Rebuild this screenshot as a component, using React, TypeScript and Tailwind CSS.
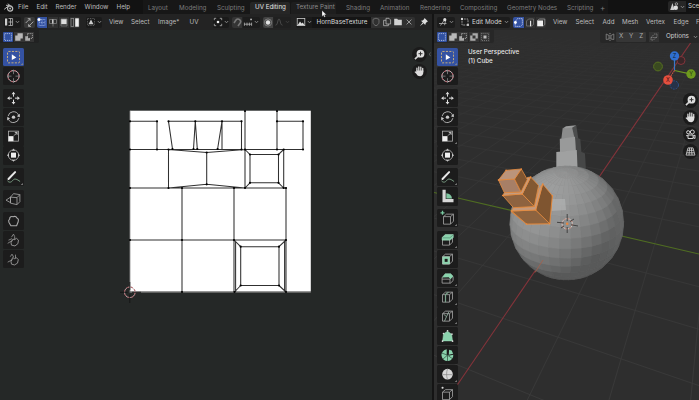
import React from "react";

type Kids = { children?: React.ReactNode };

/* Small icon drawn in a box centred on 0,0 and measured in pixels */
function Ico({ children, cls = "w-[10px] h-[10px]", box = "-5 -5 10 10" }: Kids & { cls?: string; box?: string }) {
  return (
    <svg viewBox={box} className={"shrink-0 " + cls} fill="none" stroke="#b4b4b4" strokeWidth="0.8">
      {children}
    </svg>
  );
}

function Chevron({ dim = false }: { dim?: boolean }) {
  return (
    <svg viewBox="0 0 5 4" className="h-[4px] w-[5px] shrink-0" fill="none" stroke={dim ? "#444" : "#999"} strokeWidth="0.8">
      <path d="M0.8 1 L2.5 2.8 L4.2 1" />
    </svg>
  );
}

const Txt = ({ children, cls }: Kids & { cls: string }) => (
  <span className={"shrink-0 whitespace-nowrap " + cls}>{children}</span>
);

/* ---------- select mode glyphs ---------- */
const SelNew = () => (
  <Ico cls="h-[10px] w-[10px] rounded-[1px] bg-[#3050a0]">
    <rect x="-3.4" y="-3.4" width="6.8" height="6.8" stroke="#c9d2ea" strokeDasharray="1.2 0.9" />
  </Ico>
);
const SelAdd = () => (
  <Ico cls="h-[10px] w-[10px] bg-[#353535]">
    <path d="M-1.5 -3.8H3.8V1.5H1.5V3.8H-3.8V-1.5H-1.5Z" fill="#b8b8b8" stroke="none" />
  </Ico>
);
const SelSub = () => (
  <Ico cls="h-[10px] w-[10px] bg-[#353535]">
    <path d="M-3.8 -0.8H-1V1.2H1V3.8H-3.8Z" fill="#aaa" stroke="none" />
    <path d="M-1.4 -3.4H3.4V1.4H-1.4Z" strokeDasharray="1.2 0.8" />
  </Ico>
);
const SelXor = () => (
  <Ico cls="h-[10px] w-[10px] bg-[#353535]">
    <path fillRule="evenodd" d="M-1.5 -3.8H3.8V1.5H1.5V3.8H-3.8V-1.5H-1.5ZM-1.5 -1.5V1.5H1.5V-1.5Z" fill="#aaa" stroke="none" />
  </Ico>
);
const SelAnd = () => (
  <Ico cls="h-[10px] w-[10px] bg-[#353535]">
    <rect x="-3.6" y="-3.6" width="7.2" height="7.2" strokeDasharray="1 1" stroke="#888" />
    <rect x="-1.5" y="-1.5" width="3" height="3" fill="#bbb" stroke="none" />
  </Ico>
);

/* ---------- toolbar glyphs ---------- */
const Cube = () => <path d="M-5 -2.5L-2 -5H5L5 2L2 5H-5ZM-5 -2.5H2V5M2 -2.5L5 -5" />;

const glyphs: Record<string, React.ReactNode> = {
  select: (
    <>
      <rect x="-6" y="-5.7" width="12" height="11.4" rx="1" stroke="#c3ac7c" strokeWidth="1" strokeDasharray="2.1 1.3" />
      <path d="M-1.7 -2.8L2.8 0.3L-1.7 2.8Z" fill="#fff" stroke="none" />
    </>
  ),
  cursor: (
    <>
      <circle r="5.6" stroke="#c9c9c9" strokeWidth="1" />
      <circle r="5.6" stroke="#b0505c" strokeWidth="1" strokeDasharray="2.2 2.2" />
      <path d="M0 -6.5V-2M0 6.5V2M-6.5 0H-2M6.5 0H2" stroke="#888" />
    </>
  ),
  move: (
    <>
      <path d="M0 -4V-1.5M0 4V1.5M-4 0H-1.5M4 0H1.5" stroke="#ddd" strokeWidth="1" />
      <path d="M0 -6.4L1.9 -3.8H-1.9ZM0 6.4L1.9 3.8H-1.9ZM-6.4 0L-3.8 1.9V-1.9ZM6.4 0L3.8 1.9V-1.9Z" fill="#ddd" stroke="none" />
    </>
  ),
  rotate: (
    <>
      <path d="M-5.4 -1A5.5 5.5 0 0 1 5 -2.2M5.4 1A5.5 5.5 0 0 1 -5 2.2" stroke="#bbb" strokeWidth="0.9" />
      <path d="M6.3 -3.4V0.2L3.4 -1ZM-6.3 3.4V-0.2L-3.4 1Z" fill="#ccc" stroke="none" />
      <circle r="1.7" fill="#ccc" stroke="none" />
    </>
  ),
  scale: (
    <>
      <rect x="-5" y="-5" width="10" height="10" stroke="#b0b0b0" />
      <rect x="-5" y="0" width="5" height="5" fill="#eee" stroke="none" />
      <path d="M0.6 -0.6L3.5 -3.5M1.3 -3.6H3.6V-1.3" stroke="#ddd" />
    </>
  ),
  transform: (
    <>
      <circle r="5.2" stroke="#aaa" strokeWidth="0.9" />
      <rect x="-2.5" y="-2.5" width="5" height="5" fill="#eee" stroke="none" />
      <path d="M0 -6.6L1.6 -4.5H-1.6ZM0 6.6L1.6 4.5H-1.6ZM-6.6 0L-4.5 1.6V-1.6ZM6.6 0L4.5 1.6V-1.6Z" fill="#c4c4c4" stroke="none" />
    </>
  ),
  annotate: (
    <>
      <path d="M-5 1.8L1.6 -5" stroke="#e8e8e8" strokeWidth="2" strokeLinecap="round" />
      <path d="M-6 3.7C-4 6 -2 5 -0.5 3S3.5 2 6.6 4.4" stroke="#799c83" strokeWidth="1" />
    </>
  ),
  measure: (
    <>
      <path d="M-5 -6.4H-1.8V2.9H6V6H-5Z" fill="#d8d8d8" stroke="none" />
      <path d="M-1.2 -3A6 6 0 0 1 4.5 2.3H-1.2Z" fill="#7fc5a0" stroke="none" />
    </>
  ),
  rip: (
    <>
      <path d="M-3 -2L0 -5.5L6.4 -4.5V2.5L3.5 5.5L-3 4ZM-3 -2L3.5 -1.5V5.5M3.5 -1.5L6.4 -4.5" />
      <path d="M-7.5 1L-3 -2V3.5Z" />
    </>
  ),
  grab: <path d="M-2.6 4.6L-4.6 1C-5.4 -0.6 -4.4 -1.6 -3.9 -2C-3.9 -4.4 -2 -5 -0.4 -4.4C1 -5 2.8 -4.6 3.4 -3.2C5 -2.8 5.2 -0.8 4.6 0.8L3.1 4.6Z" strokeWidth="1.1" />,
  relax: (
    <>
      <path d="M-5.8 3.2L-1 0.2M-2 -3L0 -6L1.2 -3.5V-0.5M-5 0L-1.5 -1.5" stroke="#999" />
      <path d="M-2.5 2.5L-0.6 -1L1 -0.5L3 -1.8L5 0L4.4 3.5L1.5 5.8L-2 5Z" />
    </>
  ),
  pinch: (
    <>
      <path d="M-5.8 3L-1 0.5M-3.2 -2.5L-1.5 -5L0.2 -2M2 -4.5V-1" stroke="#999" />
      <path d="M-2.5 2.5L-0.8 -1.6L1 -0.5L3 -1.4L4.8 0.5L4 4L1 5.8L-2 5Z" />
    </>
  ),
  addcube: (
    <>
      <g transform="translate(1 1)"><Cube /></g>
      <path d="M-5 -7.3V-3.3M-7 -5.3H-3" stroke="#78c8a0" strokeWidth="1.3" />
    </>
  ),
  extrude: (
    <>
      <Cube />
      <path d="M-5.4 -2.7L-2.2 -5.6H5.8V-2.6L2.5 0H-5.4Z" fill="#8ad3ad" stroke="#a5d8bd" strokeWidth="0.5" />
      <path d="M-5 -2.3H2.3L5.4 -5" stroke="#4c8067" strokeWidth="0.6" />
    </>
  ),
  inset: (
    <>
      <Cube />
      <path d="M-4.8 -2.3H2V4.8H-4.8Z" fill="#8ad3ad" stroke="#a5d8bd" strokeWidth="0.5" />
      <rect x="-2.8" y="-0.3" width="2.9" height="3" fill="#1c1c1c" stroke="none" />
    </>
  ),
  bevel: (
    <>
      <path d="M-5.4 -0.8L-2 -4H3L5.6 -1.5V2.5L3 5H-5.4ZM-5.4 1H2.5V5" />
      <path d="M-5.4 -0.6L-2.4 -4.6H3.2L5.8 -2L3 1L1.2 -0.8Z" fill="#8ad3ad" stroke="none" />
    </>
  ),
  loop: (
    <>
      <Cube />
      <path d="M-2 5V-2.5L1 -5" stroke="#7aa38b" strokeWidth="1.2" />
    </>
  ),
  knife: (
    <>
      <Cube />
      <path d="M-4 -2L-1 0.5L-3 5M-1 0.5L1.5 -4.5" stroke="#9ab9a8" />
    </>
  ),
  poly: (
    <>
      <path d="M-4.9 4.8L-4 -2.2L0 -5L4.2 -1.8L5 4.8Z" fill="#8ad3ad" stroke="#9bd8b8" strokeWidth="0.5" />
      <path d="M-5 5h.1M5 5h.1M0 -5.3h.1M-4 -2.6h.1M4.4 -2h.1" stroke="#ddd" strokeWidth="1.6" strokeLinecap="round" />
    </>
  ),
  spin: (
    <>
      <path d="M-0.8 0L-0.8 -5.8A5.9 5.9 0 1 0 5.8 -0.4L1.2 0.6L1.6 -5.5L4.2 -4.6L5.6 -1.4Z" fill="#8ad3ad" stroke="none" />
      <path d="M0 0L-6 -2.2M0 0L-4.6 4M0 0V6M0 0L5 3.6" stroke="#2b4a3b" strokeWidth="0.7" />
    </>
  ),
  smooth: (
    <>
      <circle r="5.3" fill="#d8d8d8" stroke="none" />
      <path d="M-5.2 0.5H5.2M0 -5.2C-1.2 -2 -1.2 2 0 5.2" stroke="#858585" strokeWidth="0.7" />
    </>
  ),
  shear: (
    <>
      <g transform="translate(0 1.5)"><Cube /></g>
      <path d="M-5 -5.5h.1" stroke="#ddd" strokeWidth="2" strokeLinecap="round" />
    </>
  ),
};

function Tool({ name, corner = false }: { name: string; corner?: boolean }) {
  const active = name === "select";
  return (
    <div className={"h-[18.3px] w-[21px] shrink-0 rounded-[1.5px] " + (active ? "bg-[#3452a2]" : "bg-[#1c1c1c]")}>
      <svg viewBox="-10.5 -9.15 21 18.3" className="block h-full w-full" fill="none" stroke="#a8a8a8" strokeWidth="0.8">
        {glyphs[name]}
        {corner && <path d="M9.3 5.8V7.8H7.3Z" fill="#888" stroke="none" />}
      </svg>
    </div>
  );
}

function Toolbar({ groups, corners }: { groups: string[][]; corners: string[] }) {
  return (
    <div className="flex flex-col gap-[3.4px]">
      {groups.map((g) => (
        <div key={g[0]} className="flex flex-col gap-[0.9px]">
          {g.map((n) => (
            <Tool key={n} name={n} corner={corners.includes(n)} />
          ))}
        </div>
      ))}
    </div>
  );
}

/* ---------- navigation buttons ---------- */
function NavButton({ kind }: { kind: string }) {
  return (
    <svg viewBox="-7.5 -7.5 15 15" className="h-[15px] w-[15px] shrink-0" fill="none" stroke="#d5d5d5" strokeWidth="1">
      <circle r="7.5" fill="#1b1b1b" stroke="none" />
      {kind === "zoom" && (
        <>
          <circle cx="1" cy="-0.8" r="3.9" fill="#ddd" stroke="none" />
          <path d="M-1.4 1.6L-4.6 4.6" strokeWidth="1.6" />
          <path d="M1 -2.8V1.2M-1 -0.8H3" stroke="#333" />
        </>
      )}
      {kind === "hand" && (
        <>
          <path d="M-2.6 -0.5V-3.4M-0.7 -1V-4.6M1.3 -1V-4.4M3.2 0V-3.2" strokeWidth="1.3" strokeLinecap="round" />
          <path d="M-3.2 -1H3.8V1.5C3.6 3.5 2.3 4.7 0.6 4.7C-1.3 4.7 -2.2 3.7 -3 2.4L-5 0.4L-4.2 -0.2L-3.2 0.5Z" fill="#ddd" stroke="none" />
        </>
      )}
      {kind === "camera" && (
        <>
          <circle cx="-2.3" cy="-2.2" r="1.6" />
          <circle cx="1.8" cy="-2.5" r="2" />
          <path d="M-2.5 0.5H2.6V4H-2.5ZM2.6 1.6L4.5 0.6V4L2.6 3M-4.4 1.2H-2.5" />
        </>
      )}
      {kind === "grid" && <path d="M-2.5 -3.6H2.5L4.4 3.6H-4.4ZM-3.2 -1.2H3.2M-3.8 1.3H3.8M-0.9 -3.6L-1.5 3.6M0.9 -3.6L1.5 3.6" strokeWidth="0.8" />}
    </svg>
  );
}

/* ---------- UV layout ---------- */
const uvLines = [
  "M130 121.3H157V149.5", "M130 149.5H242", "M168.5 121.3H241.5V149.5", "M168.5 121.3L172.5 149",
  "M195.3 121.3L193.5 149M195.3 121.3L197.3 149", "M222 121.3L217.6 149M222 121.3V149.5",
  "M245 111V188M277 111V149.5M277 121.3H303V149.5H245", "M168.5 149.5V188M168.5 149.5L206.7 152.5L245 149.5",
  "M206.7 152.5V184.3M168.5 188L206.7 184.3L245 188", "M130 188H286V292M283.7 149.5V188",
  "M245 149.5L250 154.5H278.5L283.7 149.5M250 154.5V182.8H278.5V154.5M250 182.8L245 188M278.5 182.8L283.7 188",
  "M182 188V292M234 188V292M130 240H286M130 292H311",
  "M234 240L240.7 246.7H279V285.5H240.7V246.7M279 246.7L286 240M279 285.5L286 292M240.7 285.5L234.5 292M235.6 242V292M284.6 242V290",
];
const uvDots = [
  [130, 121.3], [157, 121.3], [168.5, 121.3], [195.3, 121.3], [222, 121.3], [241.5, 121.3], [277, 121.3], [303, 121.3],
  [245, 111], [277, 111], [130, 149.5], [157, 149.5], [172.5, 149], [193.5, 149], [197.3, 149], [217.6, 149], [241.5, 149.5],
  [245, 149.5], [277, 149.5], [283.7, 149.5], [303, 149.5], [168.5, 149.5], [206.7, 152.5], [206.7, 184.3], [130, 188],
  [168.5, 188], [182, 188], [234, 188], [245, 188], [283.7, 188], [286, 188], [250, 154.5], [278.5, 154.5], [250, 182.8],
  [278.5, 182.8], [130, 240], [182, 240], [234, 240], [286, 240], [182, 292], [234.5, 292], [286, 292], [240.7, 246.7],
  [279, 246.7], [240.7, 285.5], [279, 285.5],
];

function UvCanvas() {
  return (
    <svg viewBox="0 29 432 371" className="absolute inset-0 h-full w-full" fill="none">
      <rect x="129.8" y="110.7" width="181" height="181.8" fill="#fff" />
      <path d={uvLines.join("")} stroke="#303030" strokeWidth="1.05" />
      <path d="M129.8 111V292.5" stroke="#555" strokeWidth="0.9" />
      {uvDots.map(([x, y], i) => (
        <circle key={i} cx={x} cy={y} r="1.1" fill="#000" />
      ))}
      <circle cx="129.8" cy="292.3" r="5.3" stroke="#d8c0c0" strokeWidth="0.9" />
      <circle cx="129.8" cy="292.3" r="5.3" stroke="#99404a" strokeWidth="1" strokeDasharray="2.1 2.1" />
      <path d="M129.8 282V290M129.8 294.5V303M120 292.3H127.5M132 292.3H141" stroke="#111" strokeWidth="0.8" />
      <path d="M430.8 52.6L429 54.3L430.8 56" stroke="#777" strokeWidth="0.7" />
    </svg>
  );
}

/* ---------- 3D viewport ---------- */
const CX = 566.8;
const CY = 223;
const R = 57;

function sphereFaces() {
  const el = (27 * Math.PI) / 180;
  const rot = 0.07;
  const project = (lat: number, lon: number) => {
    const x = Math.cos(lat) * Math.sin(lon);
    const y = Math.cos(lat) * Math.cos(lon);
    const z = Math.sin(lat);
    return [x, z * Math.cos(el) - y * Math.sin(el), y * Math.cos(el) + z * Math.sin(el)];
  };
  const faces: { d: string; fill: string }[] = [];
  for (let i = 0; i < 16; i++) {
    for (let j = 0; j < 32; j++) {
      const a = -Math.PI / 2 + (i * Math.PI) / 16;
      const b = a + Math.PI / 16;
      const l = (j * Math.PI) / 16 + rot;
      const m = l + Math.PI / 16;
      const n = project((a + b) / 2, (l + m) / 2);
      if (n[2] < -0.06) continue;
      const pts = [project(a, l), project(a, m), project(b, m), project(b, l)];
      const key = Math.max(0, -0.5 * n[0] + 0.42 * n[1] + 0.76 * n[2]);
      const rim = Math.max(0, 0.75 * n[0] + 0.6 * n[1]);
      const v = Math.round(88 + 69 * key + 16 * rim);
      const d = "M" + pts.map((p) => `${(CX + p[0] * R).toFixed(2)} ${(CY - p[1] * R).toFixed(2)}`).join("L") + "Z";
      faces.push({ d, fill: `rgb(${v},${v + 1},${v + 1})` });
    }
  }
  return faces;
}

function gridPath() {
  const vx = [731, -17];
  const vy = [-474, -17];
  const at = (X: number, Y: number) => {
    const u = 0.0945 * X;
    const w = 0.039 * Y;
    const k = 1 + u + w;
    return `${((CX + u * vx[0] + w * vy[0]) / k).toFixed(1)} ${((CY + u * vx[1] + w * vy[1]) / k).toFixed(1)}`;
  };
  let d = "";
  for (let i = -6; i <= 26; i++) if (i) d += `M${at(i, -8)}L${at(i, 40)}`;
  for (let j = -8; j <= 40; j++) if (j) d += `M${at(-6, j)}L${at(30, j)}`;
  return d;
}

function Viewport() {
  return (
    <svg viewBox="434 29 265 371" className="absolute inset-0 h-full w-full" fill="none">
      <defs>
        <linearGradient id="fade" x1="0" y1="29" x2="0" y2="400" gradientUnits="userSpaceOnUse">
          <stop offset="0.05" stopColor="#303030" />
          <stop offset="0.35" stopColor="#363636" />
          <stop offset="1" stopColor="#3c3c3c" />
        </linearGradient>
      </defs>
      <path d={gridPath()} stroke="url(#fade)" strokeWidth="0.8" />
      <path d="M434 192.5L699 254" stroke="#4f6c22" strokeWidth="1.1" />
      <path d="M447 400L699 30.5" stroke="#84333a" strokeWidth="1.1" />
      {/* rear horn */}
      <g>
        <path d="M571.5 127L576.3 125.5L578.5 140L574 139Z" fill="#4c4d4d" />
        <path d="M573.3 137L580.3 139L581.5 152.5L576 152Z" fill="#474848" />
        <path d="M577 150L585 153.5L586 171L577 170Z" fill="#464747" />
        <path d="M562.6 128.5L572 127L574.5 138L561.3 139Z" fill="#8b8c8c" />
        <path d="M562.3 128.7L566 126.3L576.3 125.3L572 127.8Z" fill="#9a9b9b" />
        <path d="M559.8 138.7L575 136.7L576 151.5L560 152Z" fill="#999a9a" />
        <path d="M556.3 152L576.8 150L577.5 168L556.3 168Z" fill="#a0a1a1" />
      </g>
      <circle cx={CX} cy={CY} r="56" fill="#777" />
      {sphereFaces().map((f, i) => (
        <path key={i} d={f.d} fill={f.fill} stroke={f.fill} strokeWidth="0.4" />
      ))}
      <path d="M552 199L565 199L566 210L551.5 211Z" fill="#b0b2b2" opacity="0.7" />
      <path d="M535 272.5L543 260" stroke="#a65f4a" strokeWidth="0.8" />
      {/* selected horn */}
      <g stroke="#e68b3f" strokeWidth="0.8" strokeLinejoin="round">
        <path d="M536 208.5L542.5 195.8L552.3 195.7L549.7 223.7L526.5 224L511.5 212Z" fill="#8f633d" />
        <path d="M511.5 211L535.7 210L550 223.7L526.5 224Z" fill="#8d633f" />
        <path d="M535.7 210L542.7 184L552.3 195.7L549.7 223.7Z" fill="#7f5530" />
        <path d="M511.7 211L513.5 207.5L534 206.5L539 189L542.7 184L535.7 210Z" fill="#c59a7c" />
        <path d="M502.7 195.5L522.3 194L534.3 206.5L513.5 207.7Z" fill="#8e6340" />
        <path d="M522.3 194L530.7 177L538.6 185.5L534.3 206.5Z" fill="#825832" />
        <path d="M502.7 195.5L504.5 192.5L520.5 192L527.3 177.5L530.7 177L522.3 194Z" fill="#c69c7e" />
        <path d="M498.5 180L514.5 179L521 192L504.3 192.7Z" fill="#a77f66" />
        <path d="M514.5 179L521.3 169L527.3 179.5L521 192Z" fill="#805530" />
        <path d="M498.5 180L506 170.3L521.3 169L514.5 179Z" fill="#bb947a" />
      </g>
      <g fill="#f08c3c">
        {[[498.5, 180], [506, 170.3], [521.3, 169], [502.7, 195.5], [522.3, 194], [511.5, 211], [535.7, 210], [542.7, 184], [552.3, 195.7], [549.7, 223.7], [526.5, 224], [530.7, 177]].map(([x, y], i) => (
          <circle key={i} cx={x} cy={y} r="0.8" />
        ))}
      </g>
      {/* 3D cursor and origin */}
      <circle cx="567.2" cy="223.8" r="5.2" stroke="#d9cfcb" strokeWidth="0.9" />
      <circle cx="567.2" cy="223.8" r="5.2" stroke="#bd7361" strokeWidth="0.9" strokeDasharray="2 2" />
      <path d="M567.2 214V221M567.2 227V233M557 222.3L564 223M571 224.8L578 226M561 228L564 226M570 221.5L574 219" stroke="#303030" strokeWidth="0.8" />
      <circle cx="567.2" cy="223.8" r="1.3" fill="#e8873e" />
      {/* axis gizmo */}
      <circle cx="658" cy="66.5" r="4.4" fill="#3a4a20" stroke="#567020" />
      <circle cx="681" cy="60.5" r="4" fill="#3a2628" stroke="#83343b" />
      <circle cx="674.3" cy="85" r="4.2" fill="#263248" stroke="#2f5288" strokeDasharray="2 1" />
      <path d="M674.5 70.5V57" stroke="#3b78c8" strokeWidth="1.2" />
      <path d="M674.5 70.5L690 73.8" stroke="#6f9822" strokeWidth="1.2" />
      <path d="M674.5 70.5L668 80" stroke="#d95345" strokeWidth="1.1" strokeDasharray="1.6 0.8" />
      <circle cx="674.5" cy="56" r="4.7" fill="#2f6fd0" />
      <circle cx="691" cy="74" r="4.7" fill="#6e9a1e" />
      <circle cx="668" cy="80" r="4.8" fill="#e5503f" />
      <g fontSize="5.5" textAnchor="middle" fontFamily="Inter, sans-serif">
        <text x="674.5" y="58" fill="#123">Z</text>
        <text x="691" y="76" fill="#231">Y</text>
        <text x="668" y="82" fill="#411">X</text>
      </g>
    </svg>
  );
}

/* ---------- bars ---------- */
function TopBar() {
  return (
    <header className="flex h-[14px] shrink-0 bg-[#121212]">
      <div className="flex h-[14px] w-[143px] shrink-0 items-center pl-[4px] text-[#bdbdbd]">
        <Ico cls="w-[10px] h-[9px]" box="-5 -4.5 10 9">
          <path d="M-4.8 1.8L0.4 -2.2H-3M0.4 -2.2L-1 -3.9M0.4 -2.2L3.4 0" stroke="#bbb" strokeWidth="1" />
          <circle cx="1.1" cy="1" r="2.6" stroke="#bbb" strokeWidth="1.2" />
          <circle cx="1.1" cy="1" r="0.9" fill="#bbb" stroke="none" />
        </Ico>
        <Txt cls="ml-[4px] w-[18.5px]">File</Txt>
        <Txt cls="w-[19px]">Edit</Txt>
        <Txt cls="w-[29px]">Render</Txt>
        <Txt cls="w-[32px]">Window</Txt>
        <Txt cls="w-[20px]">Help</Txt>
      </div>
      <nav className="flex h-[14px] w-[465px] shrink-0 items-center bg-[#171717] pt-[2px] text-[#7c7c7c]">
        <Txt cls="w-[31px] pl-[5px]">Layout</Txt>
        <Txt cls="w-[38px] pl-[5px]">Modeling</Txt>
        <Txt cls="w-[38px] pl-[5px]">Sculpting</Txt>
        <Txt cls="h-[12px] w-[40px] rounded-t-[2px] bg-[#262626] pl-[5px] leading-[11px] text-[#e6e6e6]">UV Editing</Txt>
        <Txt cls="ml-px h-[12px] w-[45px] rounded-t-[2px] bg-[#1e1e1e] pl-[5px] leading-[11px] text-[#8c8c8c]">Texture Paint</Txt>
        <Txt cls="ml-[5px] w-[34px] pl-[5px]">Shading</Txt>
        <Txt cls="w-[40px] pl-[5px]">Animation</Txt>
        <Txt cls="w-[40px] pl-[5px]">Rendering</Txt>
        <Txt cls="w-[47px] pl-[5px]">Compositing</Txt>
        <Txt cls="w-[60px] pl-[5px]">Geometry Nodes</Txt>
        <Txt cls="w-[33px] pl-[5px]">Scripting</Txt>
        <Txt cls="ml-[5px] h-[9px] w-[8px] text-[8px] leading-[8px]">+</Txt>
      </nav>
      <div className="ml-[60px] flex h-[13px] min-w-0 flex-1 items-center overflow-hidden text-[#bcbcbc]">
        <div className="flex h-[11px] w-[18px] shrink-0 items-center justify-center gap-px rounded-l-[2px] bg-[#262626]">
          <Ico cls="w-[10px] h-[9px]" box="-5 -4.5 10 9">
            <path d="M-3.8 3.5L-1.5 -3.5L0.5 3.5Z" fill="#ccc" stroke="none" />
            <circle cx="1.8" cy="1.2" r="2.2" fill="#ddd" stroke="none" />
            <circle cx="2.4" cy="-2.6" r="1.2" />
          </Ico>
          <Chevron />
        </div>
        <Txt cls="pl-[2px] text-[#d0d0d0]">Sce</Txt>
      </div>
    </header>
  );
}

function UvHeader() {
  return (
    <div className="flex h-[16px] shrink-0 items-center bg-[#232323] pl-[4px] text-[#bdbdbd]">
      <div className="flex h-[11px] w-[17px] shrink-0 items-center gap-px rounded-[2px] bg-[#1a1a1a]">
        <Ico>
          <rect x="-4" y="-3.5" width="2.2" height="7" fill="#ccc" stroke="none" />
          <path d="M-0.5 -3.5H3.6V3.5H-0.5M-0.5 0H3.6M1.5 -3.5V3.5" />
        </Ico>
        <Chevron />
      </div>
      <Ico cls="ml-[3px] h-[11px] w-[11px] rounded-[2px] bg-[#383838]">
        <path d="M-3.5 0.5L0.5 -3.5M-0.8 3.5L3.5 -0.8M0.5 -3.5H-1.6M0.5 -3.5V-1.5M-0.8 3.5H1.4M-0.8 3.5V1.5" />
      </Ico>
      <div className="ml-[2px] flex w-[44px] shrink-0 gap-px">
        <Ico cls="h-[11px] w-[10px] rounded-l-[2px] bg-[#3452a2]">
          <path d="M-3 -3H3V3H-3ZM0 -3V3M-3 0H3" stroke="#93a8dc" strokeDasharray="1.2 .6" />
          <circle cx="-3" cy="-3" r="1.5" fill="#fff" stroke="none" />
        </Ico>
        <Ico cls="h-[11px] w-[10px] bg-[#303030]">
          <path d="M-3.5 -3H3.5V1H-3.5ZM0 -3V4" stroke="#808080" />
          <path d="M-0.2 -3V1" stroke="#eee" strokeWidth="1.1" />
        </Ico>
        <Ico cls="h-[11px] w-[10px] bg-[#303030]">
          <path d="M-3 -3.5H3V3.5H-3Z" stroke="#777" />
          <rect x="-2.8" y="-3.3" width="5.4" height="5" fill="#ddd" stroke="none" />
        </Ico>
        <Ico cls="h-[11px] w-[10px] rounded-r-[2px] bg-[#303030]">
          <rect x="-4" y="-4" width="2.6" height="8" stroke="#888" />
          <rect x="0.2" y="-4.2" width="3.6" height="8.4" fill="#eee" stroke="none" />
        </Ico>
      </div>
      <div className="ml-[5px] flex h-[11px] w-[16px] shrink-0 items-center gap-px rounded-[2px] bg-[#1a1a1a]">
        <Ico>
          <path d="M-3.5 -3.5H3.5V3.5H-3.5Z" stroke="#666" strokeDasharray="1.4 1" />
          <path d="M0 -2.4L2.5 2.2H-2.5Z" fill="#ccc" stroke="none" />
        </Ico>
        <Chevron />
      </div>
      <Txt cls="ml-[7px] w-[22px]">View</Txt>
      <Txt cls="w-[27px]">Select</Txt>
      <Txt cls="w-[31.5px]">Image*</Txt>
      <Txt cls="w-[23.5px]">UV</Txt>
      <div className="flex h-[11px] w-[16px] shrink-0 items-center gap-px rounded-[2px] bg-[#1a1a1a]">
        <Ico>
          <path d="M-3.7 -1.8V-3.7H-1.8M1.8 -3.7H3.7V-1.8M3.7 1.8V3.7H1.8M-1.8 3.7H-3.7V1.8" />
          <circle r="1.3" fill="#eee" stroke="none" />
        </Ico>
        <Chevron />
      </div>
      <Ico cls="ml-[3px] h-[11px] w-[10px] rounded-l-[2px] bg-[#343434]">
        <path d="M-3 0.5L-1 -2.4A2.5 2.5 0 0 1 3 0.8L1 3.4" stroke="#777" strokeWidth="1.6" />
      </Ico>
      <div className="ml-px flex h-[11px] w-[17px] shrink-0 items-center gap-px rounded-r-[2px] bg-[#1c1c1c]">
        <Ico>
          <path d="M-3.8 2.2H3.8M-3.6 0.6V3.8M-1 0.6V3.8M1.4 0.6V3.8M3.6 0.6V3.8" />
          <path d="M3 -2.6h.1" strokeWidth="1.8" strokeLinecap="round" />
        </Ico>
        <Chevron />
      </div>
      <Ico cls="ml-[3px] h-[11px] w-[10px] rounded-l-[2px] bg-[#424242]">
        <circle r="3.6" stroke="#8c8c8c" />
        <circle r="2.2" fill="#e2e2e2" stroke="none" />
      </Ico>
      <div className="ml-px flex h-[11px] w-[17px] shrink-0 items-center gap-px rounded-r-[2px] bg-[#202020]">
        <Ico><path d="M-3.5 3.2C-1 3.2 -1.5 -3 0 -3S1 3.2 3.5 3.2" stroke="#555" /></Ico>
        <Chevron dim />
      </div>
      <div className="ml-[5px] flex h-[11px] w-[16px] shrink-0 items-center gap-px rounded-l-[2px] bg-[#1a1a1a]">
        <Ico>
          <rect x="-3.8" y="-3.6" width="7.6" height="7.2" stroke="#ccc" />
          <path d="M-3.4 3.2L-1 -0.4L0.6 1.6L1.8 0.6L3.5 3.2Z" fill="#ddd" stroke="none" />
        </Ico>
        <Chevron />
      </div>
      <Txt cls="flex h-[11px] w-[59px] items-center bg-[#151515] pl-[4.5px] text-[#dadada]">HornBaseTexture</Txt>
      <div className="flex h-[11px] w-[44px] shrink-0 items-center gap-px rounded-r-[2px] bg-[#303030]">
        <Ico><path d="M0 -3.8L3 -2.7V0.3C3 2 1.6 3 0 3.8C-1.6 3 -3 2 -3 0.3V-2.7Z" stroke="#777" /></Ico>
        <Ico><path d="M-1 -3.7H2L3.6 -2V2H-1ZM-1 -1.7H-3.4V3.7H1.4V2" /></Ico>
        <Ico><path d="M-3.8 -3.2H-0.8L0 -2.2H3.8V3.2H-3.8Z" fill="#d2d2d2" stroke="none" /></Ico>
        <Ico><path d="M-2.4 -2.4L2.4 2.4M2.4 -2.4L-2.4 2.4" /></Ico>
      </div>
      <Ico cls="ml-[4px] h-[10px] w-[10px]">
        <path d="M0.6 -4L4 -0.6L2.8 0L1.6 1.4L1.3 3L-3 -1.3L-1.4 -1.6L0 -2.8ZM-1.4 0.6L-4 4L-0.6 1.4" fill="#ddd" stroke="none" />
      </Ico>
    </div>
  );
}

function ViewHeader() {
  return (
    <div className="flex h-[16px] shrink-0 items-center overflow-hidden bg-[#282828] pl-[3px] text-[#bdbdbd]">
      <div className="flex h-[11px] w-[18px] shrink-0 items-center gap-px rounded-[2px] bg-[#1c1c1c] pl-px">
        <Ico>
          <path d="M-4 1.5H3.5M-2.5 3.5L1 -1.5M1.5 3.2L2.5 -1" />
          <circle cx="1.8" cy="-2.3" r="1.6" fill="#ddd" stroke="none" />
        </Ico>
        <Chevron />
      </div>
      <div className="ml-[5px] flex h-[11px] w-[50px] shrink-0 items-center rounded-[2px] bg-[#1c1c1c]">
        <Ico>
          <path d="M-3 -1V3H3V-3H-1" strokeDasharray="1.8 0.8" />
          <circle cx="-3" cy="-3" r="1.2" fill="#ddd" stroke="none" />
          <circle cx="3" cy="3" r="1.1" fill="#ddd" stroke="none" />
        </Ico>
        <Txt cls="ml-[2px] w-[32px] text-[#d6d6d6]">Edit Mode</Txt>
        <Chevron />
      </div>
      <div className="ml-[3px] flex w-[34px] shrink-0 gap-px">
        <Ico cls="h-[11px] w-[11px] rounded-l-[2px] bg-[#3452a2]">
          <path d="M-2.5 -1.5L-1 -3.5H3.5V2L2 3.5H-3V-1" stroke="#b6c3e6" strokeDasharray="1.4 .5" />
          <circle cx="-2.8" cy="0" r="1.3" fill="#fff" stroke="none" />
        </Ico>
        <Ico cls="h-[11px] w-[10px] bg-[#303030]">
          <path d="M-3.5 -1.5L-1.5 -3.5H3.5V2L1.5 3.5H-3.5Z" stroke="#777" />
          <path d="M0.6 -1.8V3.8" stroke="#eee" strokeWidth="1.1" />
        </Ico>
        <Ico cls="h-[11px] w-[10px] rounded-r-[2px] bg-[#303030]">
          <path d="M-3.5 -1.8L-1.8 -3.5H3.8V2L2.2 3.5" stroke="#999" />
          <rect x="-3.8" y="-2" width="5.8" height="5.8" fill="#eee" stroke="none" />
        </Ico>
      </div>
      <Txt cls="ml-[6px] w-[22.5px]">View</Txt>
      <Txt cls="w-[27px]">Select</Txt>
      <Txt cls="w-[19.5px]">Add</Txt>
      <Txt cls="w-[24px]">Mesh</Txt>
      <Txt cls="w-[27.5px]">Vertex</Txt>
      <Txt cls="w-[22.5px]">Edge</Txt>
      <Txt cls="w-[3px]">F</Txt>
    </div>
  );
}

export default function App() {
  return (
    <div className="relative flex h-[400px] w-[699px] flex-col overflow-hidden bg-[#141414] font-['Inter',sans-serif] text-[6.25px] leading-none">
      <TopBar />
      <div className="flex min-h-0 flex-1 gap-[2px]">
        <section className="flex w-[432px] shrink-0 flex-col">
          <UvHeader />
          <div className="relative min-h-0 flex-1 overflow-hidden bg-[#252827]">
            <div className="absolute inset-x-0 -top-px bottom-0">
              <UvCanvas />
            </div>
            <div className="relative flex h-full justify-between">
              <div>
                <div className="mb-[5px] flex h-[13px] w-[39px] items-center gap-[0.7px] rounded-br-[2px] bg-[#212222] pl-[3px]">
                  <SelNew /><SelAdd /><SelSub />
                </div>
                <div className="pl-[3.3px]">
                  <Toolbar
                    corners={["select", "annotate"]}
                    groups={[["select", "cursor"], ["move", "rotate", "scale", "transform"], ["annotate"], ["rip"], ["grab", "relax", "pinch"]]}
                  />
                </div>
              </div>
              <div className="flex flex-col gap-[2px] pr-[5.5px] pt-[17px]">
                <NavButton kind="zoom" />
                <NavButton kind="hand" />
              </div>
            </div>
          </div>
        </section>
        <section className="flex min-w-0 flex-1 flex-col">
          <ViewHeader />
          <div className="relative min-h-0 flex-1 overflow-hidden bg-[#2e2e2e]">
            <div className="absolute inset-x-0 -top-px bottom-0">
              <Viewport />
            </div>
            <div className="relative">
              <div className="flex h-[13px] justify-between">
                <div className="flex w-[60px] items-center gap-[0.7px] rounded-br-[2px] bg-[#272727] pl-[3px]">
                  <SelNew /><SelAdd /><SelSub /><SelXor /><SelAnd />
                </div>
                <div className="flex w-[99px] items-center rounded-bl-[2px] bg-[#272727] pl-[5px] text-[#aaa]">
                  <Ico><path d="M0 -4V4" strokeDasharray="1 .8" /><path d="M-1 -1.5L-3.8 -3V2.5L-1 2ZM1 -1.5L3.8 -3V2.5L1 2Z" stroke="#888" /></Ico>
                  <div className="ml-px flex h-[10px] w-[30px] shrink-0 items-center justify-around rounded-[1px] bg-[#363636]">
                    <span>X</span><span>Y</span><span>Z</span>
                  </div>
                  <Ico cls="ml-[3px] h-[10px] w-[10px] bg-[#333]"><path d="M-3 0.5L0.5 -3H3V-0.5L-0.5 3H-3ZM-3 0.5H3" stroke="#888" strokeDasharray="1.5 .7" /></Ico>
                  <Txt cls="ml-[7px] w-[26.5px] text-[#cfcfcf]">Options</Txt>
                  <Chevron />
                </div>
              </div>
              <div className="flex pl-[3.2px] pt-[5px]">
                <Toolbar
                  corners={["select", "scale", "annotate", "addcube", "extrude", "bevel", "loop", "knife", "smooth"]}
                  groups={[
                    ["select", "cursor"],
                    ["move", "rotate", "scale", "transform"],
                    ["annotate", "measure"],
                    ["addcube"],
                    ["extrude", "inset", "bevel", "loop", "knife", "poly", "spin", "smooth", "shear"],
                  ]}
                />
                <div className="ml-[9.8px] flex-1 pt-[0.8px] font-medium text-[#e8e8e8]">
                  <div className="h-[9.7px]">User Perspective</div>
                  <div>(1) Cube</div>
                </div>
                <div className="flex flex-col gap-[2px] pr-[1.5px] pt-[45px]">
                  <NavButton kind="zoom" />
                  <NavButton kind="hand" />
                  <NavButton kind="camera" />
                  <NavButton kind="grid" />
                </div>
              </div>
            </div>
          </div>
        </section>
      </div>
      {/* mouse pointer */}
      <svg viewBox="0 0 6 8" className="absolute left-[321px] top-[10px] h-[8px] w-[6px]">
        <path d="M1 0.4V6.4L2.4 5.2L3.4 7.3L4.4 6.8L3.5 4.8H5.4Z" fill="#fff" stroke="#222" strokeWidth="0.3" />
      </svg>
    </div>
  );
}
